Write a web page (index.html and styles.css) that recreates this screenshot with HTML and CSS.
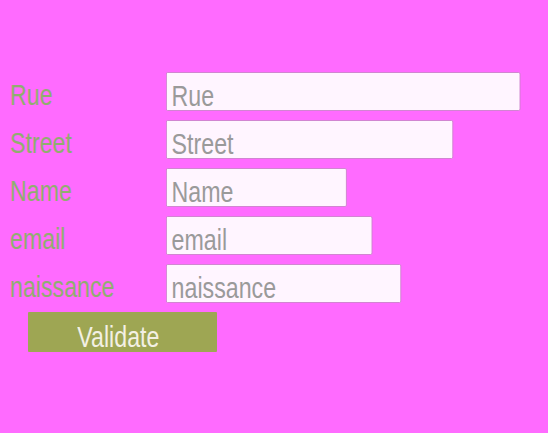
FILE: index.html
```html
<!DOCTYPE html>
<html>
<head>
<meta charset="utf-8">
<link rel="stylesheet" href="styles.css">
</head>
<body>
<form class="form">
  <div class="row"><label class="label"><span class="narrow">Rue</span></label><input class="field w-rue" placeholder="Rue"></div>
  <div class="row"><label class="label"><span class="narrow">Street</span></label><input class="field w-street" placeholder="Street"></div>
  <div class="row"><label class="label"><span class="narrow">Name</span></label><input class="field w-name" placeholder="Name"></div>
  <div class="row"><label class="label"><span class="narrow">email</span></label><input class="field w-email" placeholder="email"></div>
  <div class="row"><label class="label"><span class="narrow">naissance</span></label><input class="field w-naissance" placeholder="naissance"></div>
  <button type="button" class="btn"><span class="narrow narrow-center">Validate</span></button>
</form>
</body>
</html>
```
FILE: styles.css
```css
html, body {
  margin: 0;
  padding: 0;
  background: #ff6bff;
  height: 100%;
  overflow: hidden;
}
body {
  font-family: "Liberation Sans", Arial, sans-serif;
}
.form {
  padding-top: 72px;
  display: flex;
  flex-direction: column;
  gap: 9px;
}
.row {
  display: flex;
  align-items: flex-start;
  height: 39px;
}
.narrow {
  display: inline-block;
  transform: scaleX(0.8);
  transform-origin: left center;
}
.narrow-center {
  transform-origin: center center;
}
.label {
  flex: none;
  width: 156px;
  padding-left: 10px;
  padding-top: 7px;
  font-size: 29px;
  line-height: 33px;
  color: #90ad70;
  white-space: nowrap;
}
.field {
  flex: none;
  box-sizing: border-box;
  height: 39px;
  margin: 0;
  padding: 9px 4px 0 6px;
  border: 1px solid #cc80cc;
  border-radius: 2px;
  background: #fff5ff;
  font-family: "Liberation Sans", Arial, sans-serif;
  font-size: 29px;
  line-height: 33px;
  color: #999;
  outline: none;
  transform: scaleX(0.8);
  transform-origin: left center;
}
.field::placeholder {
  color: #9a9a9a;
}
.w-rue { width: 442.5px; }
.w-street { width: 358.75px; }
.w-name { width: 226.25px; }
.w-email { width: 257.5px; }
.w-naissance { width: 293.75px; }
.btn {
  align-self: flex-start;
  box-sizing: border-box;
  margin-left: 28px;
  width: 189px;
  height: 40px;
  border: none;
  border-radius: 1px;
  background: #9ea653;
  color: #f3f0e4;
  font-family: "Liberation Sans", Arial, sans-serif;
  font-size: 29px;
  line-height: 30px;
  padding: 10px 8px 0 0;
}
```
